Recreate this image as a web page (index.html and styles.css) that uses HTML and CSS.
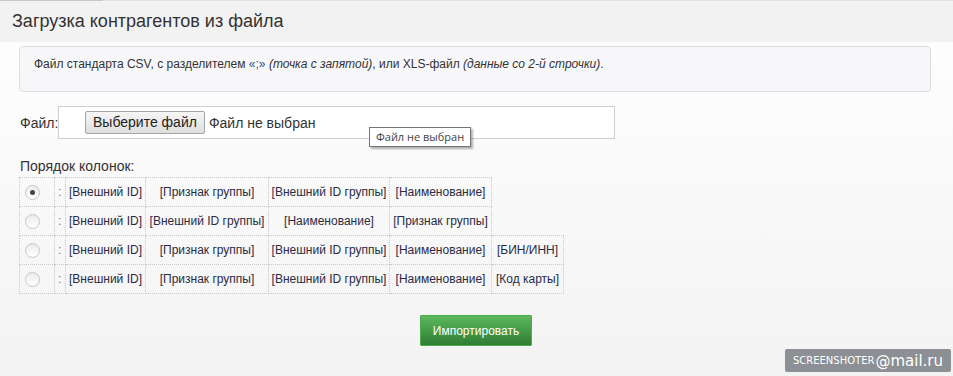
FILE: index.html
```html
<!DOCTYPE html>
<html lang="ru">
<head>
    <meta charset="UTF-8">
    <title>Загрузка контрагентов из файла</title>
    <link rel="stylesheet" href="styles.css">
</head>
<body>
    <div class="page-header">
        <h1 class="page-title">Загрузка контрагентов из файла</h1>
    </div>

    <div class="content">
        <div class="info-box">
            Файл стандарта CSV, с разделителем <span class="quote">«;»</span> <i>(точка с запятой)</i>, или XLS-файл <i>(данные со 2-й строчки)</i>.
        </div>

        <div class="file-row">
            <label class="file-label">Файл:</label>
            <div class="file-input">
                <span class="file-button">Выберите файл</span>
                <span class="file-name">Файл не выбран</span>
                <span class="tooltip">Файл не выбран</span>
            </div>
        </div>

        <div class="order-label">Порядок колонок:</div>

        <table class="columns-table">
            <colgroup>
                <col class="col-radio">
                <col class="col-sep">
                <col class="col-1">
                <col class="col-2">
                <col class="col-3">
                <col class="col-4">
                <col class="col-5">
            </colgroup>
            <tr>
                <td class="radio-cell"><span class="radio checked"></span></td>
                <td class="sep">:</td>
                <td>[Внешний ID]</td>
                <td>[Признак группы]</td>
                <td>[Внешний ID группы]</td>
                <td>[Наименование]</td>
                <td class="empty"></td>
            </tr>
            <tr>
                <td class="radio-cell"><span class="radio"></span></td>
                <td class="sep">:</td>
                <td>[Внешний ID]</td>
                <td>[Внешний ID группы]</td>
                <td>[Наименование]</td>
                <td>[Признак группы]</td>
                <td class="empty"></td>
            </tr>
            <tr>
                <td class="radio-cell"><span class="radio"></span></td>
                <td class="sep">:</td>
                <td>[Внешний ID]</td>
                <td>[Признак группы]</td>
                <td>[Внешний ID группы]</td>
                <td>[Наименование]</td>
                <td>[БИН/ИНН]</td>
            </tr>
            <tr>
                <td class="radio-cell"><span class="radio"></span></td>
                <td class="sep">:</td>
                <td>[Внешний ID]</td>
                <td>[Признак группы]</td>
                <td>[Внешний ID группы]</td>
                <td>[Наименование]</td>
                <td>[Код карты]</td>
            </tr>
        </table>

        <div class="actions">
            <button class="btn-import">Импортировать</button>
        </div>
    </div>

    <div class="watermark">SCREENSHOTER<span class="mail">@mail.ru</span></div>
</body>
</html>
```

FILE: styles.css
```css
html, body {
    height: 100%;
}

body {
    margin: 0;
    font-family: "Liberation Sans", Arial, sans-serif;
    color: #333;
    background: linear-gradient(180deg, #ffffff 0%, #f3f3f3 100%);
    position: relative;
    overflow: hidden;
}

.page-header {
    position: relative;
    background: #f2f2f2;
    border-top: 1px solid #e2e2e2;
    height: 41px;
    padding-left: 12px;
}

.page-header::before {
    content: "";
    position: absolute;
    top: -1px;
    left: 0;
    width: 103px;
    height: 1px;
    background: #c9c9c9;
}

.page-title {
    margin: 0;
    font-size: 18px;
    font-weight: normal;
    line-height: 40px;
    color: #333;
}

.content {
    padding: 4px 22px 0 19px;
}

.info-box {
    background: #f7f7fa;
    border: 1px solid #dcdce4;
    border-radius: 4px;
    padding: 9px 14px 19px;
    font-size: 12px;
    line-height: 16px;
    color: #333;
}

.info-box .quote {
    color: #2a4f8f;
}

.file-row {
    display: flex;
    align-items: center;
    margin-top: 14px;
}

.file-label {
    font-size: 14px;
    width: 38px;
    padding-left: 1px;
}

.file-input {
    position: relative;
    display: flex;
    align-items: center;
    width: 529px;
    height: 31px;
    padding-left: 26px;
    background: #fff;
    border: 1px solid #cfcfcf;
}

.file-button {
    display: inline-block;
    height: 21px;
    line-height: 21px;
    padding: 0 7px;
    font-size: 14px;
    color: #222;
    background: linear-gradient(180deg, #f6f6f6 0%, #dedede 100%);
    border: 1px solid #a5a5a5;
    border-radius: 2px;
}

.file-name {
    margin-left: 4px;
    font-size: 14px;
    color: #333;
}

.tooltip {
    position: absolute;
    left: 310px;
    top: 20px;
    padding: 2px 6px;
    font-family: "Open Sans", "DejaVu Sans", sans-serif;
    font-size: 11px;
    line-height: 14px;
    color: #444;
    background: #fff;
    border: 1px solid #767676;
    box-shadow: 2px 2px 2px rgba(0, 0, 0, 0.3);
    white-space: nowrap;
}

.order-label {
    font-size: 14px;
    margin-top: 19px;
    line-height: 16px;
    padding-left: 1px;
}

.columns-table {
    margin-top: 3px;
    border-collapse: collapse;
    table-layout: fixed;
    font-size: 12px;
}

.col-radio { width: 35px; }
.col-sep { width: 11px; }
.col-1 { width: 80px; }
.col-2 { width: 123px; }
.col-3 { width: 121px; }
.col-4 { width: 102px; }
.col-5 { width: 72px; }

.columns-table td {
    height: 28px;
    padding: 0;
    text-align: center;
    white-space: nowrap;
    border: 1px dotted #c8c8c8;
    color: #2b2b45;
}

.columns-table td.radio-cell {
    text-align: left;
    padding-left: 5px;
}

.columns-table td.sep {
    text-align: left;
    padding-left: 3px;
    color: #5a7aa8;
}

.columns-table td.empty {
    border: none;
}

.radio {
    display: inline-block;
    vertical-align: middle;
    position: relative;
    width: 13px;
    height: 13px;
    border: 1px solid #c6c6c6;
    border-radius: 50%;
    background: linear-gradient(180deg, #ececec 0%, #ffffff 100%);
}

.radio.checked::after {
    content: "";
    position: absolute;
    left: 4px;
    top: 4px;
    width: 5px;
    height: 5px;
    border-radius: 50%;
    background: #444;
}

.actions {
    display: flex;
    justify-content: center;
    margin-top: 21px;
    padding-left: 2px;
}

.btn-import {
    width: 112px;
    height: 31px;
    font-family: "Liberation Sans", Arial, sans-serif;
    font-size: 12px;
    color: #fff;
    background: linear-gradient(180deg, #5cb85c 0%, #2f7d34 100%);
    border: 1px solid #4cae4c;
    border-radius: 1px;
    cursor: pointer;
}

.watermark {
    position: absolute;
    right: 2px;
    bottom: 4px;
    height: 23px;
    padding: 0 8px 0 8px;
    display: flex;
    align-items: center;
    font-family: "DejaVu Sans", sans-serif;
    font-size: 10px;
    color: #fff;
    background: #8c8f94;
    border-radius: 2px;
}

.watermark .mail {
    font-size: 15px;
    margin-left: 1px;
}
```
